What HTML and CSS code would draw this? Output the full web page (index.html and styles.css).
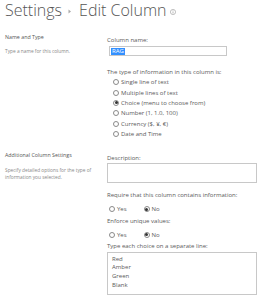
FILE: index.html
```html
<!DOCTYPE html>
<html lang="en">
<head>
    <meta charset="UTF-8">
    <title>Settings - Edit Column</title>
    <link rel="stylesheet" href="styles.css">
</head>
<body>
    <h1 class="page-title">
        <span>Settings</span>
        <svg class="crumb-sep" width="4" height="5" viewBox="0 0 4 5"><path d="M0.5 0.5 L3 2.5 L0.5 4.5 Z" fill="#aaa"/></svg>
        <span>Edit Column</span>
        <svg class="info-icon" width="6" height="6" viewBox="0 0 12 12"><circle cx="6" cy="6" r="5.2" fill="none" stroke="#999" stroke-width="1.2"/><rect x="5.3" y="5" width="1.4" height="4" fill="#999"/><rect x="5.3" y="2.8" width="1.4" height="1.4" fill="#999"/></svg>
    </h1>

    <div class="section section-first">
        <div class="section-info">
            <h2>Name and Type</h2>
            <p>Type a name for this column.</p>
        </div>
        <div class="section-body">
            <div class="field-label">Column name:</div>
            <div class="name-input"><span class="selected">RAG</span></div>

            <div class="field-label type-label">The type of information in this column is:</div>
            <div class="type-list">
                <div class="radio-row"><span class="radio"></span>Single line of text</div>
                <div class="radio-row"><span class="radio"></span>Multiple lines of text</div>
                <div class="radio-row"><span class="radio checked"></span>Choice (menu to choose from)</div>
                <div class="radio-row"><span class="radio"></span>Number (1, 1.0, 100)</div>
                <div class="radio-row"><span class="radio"></span>Currency ($, ¥, €)</div>
                <div class="radio-row"><span class="radio"></span>Date and Time</div>
            </div>
        </div>
    </div>

    <div class="section section-second">
        <div class="section-info">
            <h2>Additional Column Settings</h2>
            <p>Specify detailed options for the type of information you selected.</p>
        </div>
        <div class="section-body">
            <div class="field-label">Description:</div>
            <div class="text-box description-box"></div>

            <div class="field-label require-label">Require that this column contains information:</div>
            <div class="yes-no first-yes-no">
                <span class="radio"></span><span class="opt">Yes</span>
                <span class="radio checked"></span><span class="opt">No</span>
            </div>

            <div class="field-label enforce-label">Enforce unique values:</div>
            <div class="yes-no">
                <span class="radio"></span><span class="opt">Yes</span>
                <span class="radio checked"></span><span class="opt">No</span>
            </div>

            <div class="field-label choices-label">Type each choice on a separate line:</div>
            <div class="text-box choices-box">
                <div>Red</div>
                <div>Amber</div>
                <div>Green</div>
                <div>Blank</div>
            </div>
        </div>
    </div>
</body>
</html>
```
FILE: styles.css
```css
* {
    margin: 0;
    padding: 0;
    box-sizing: border-box;
}

body {
    font-family: 'Open Sans', 'Liberation Sans', sans-serif;
    background: #fff;
    color: #555;
    padding: 0 5px;
}

.page-title {
    display: flex;
    align-items: center;
    font-size: 16px;
    font-weight: 300;
    line-height: 20px;
    color: #555;
}

.crumb-sep {
    margin: 2px 7px 0 6px;
}

.info-icon {
    margin: 3px 0 0 4px;
}

.section {
    display: grid;
    grid-template-columns: 102px 1fr;
}

.section-first {
    margin-top: 13px;
}

.section-second {
    margin-top: 12px;
}

.section-info h2 {
    font-size: 5.3px;
    font-weight: 400;
    line-height: 8px;
    color: #555;
}

.section-info p {
    font-size: 4.8px;
    line-height: 6.6px;
    color: #888;
    margin-top: 7px;
    padding-right: 6px;
}

.section-second .section-info p {
    margin-top: 8px;
}

.section-body {
    padding-top: 2.5px;
    font-size: 6px;
    color: #5a5a5a;
}

.field-label {
    line-height: 8px;
}

.name-input {
    margin: 2.5px 0 0 2px;
    width: 118px;
    height: 10px;
    border: 1px solid #c8c8c8;
    padding: 1px 0 0 1px;
    line-height: 7px;
}

.selected {
    background: #3390ff;
    color: #fff;
    padding: 0 1px;
    display: inline-block;
}

.type-label {
    margin-top: 11.5px;
}

.type-list {
    margin-top: 1.5px;
    padding-left: 6px;
}

.radio-row {
    display: flex;
    align-items: center;
    height: 10.4px;
}

.radio {
    width: 6px;
    height: 6px;
    border: 1px solid #8a8a8a;
    border-radius: 50%;
    margin-right: 2px;
    display: flex;
    align-items: center;
    justify-content: center;
    flex-shrink: 0;
}

.radio.checked::after {
    content: '';
    width: 3px;
    height: 3px;
    border-radius: 50%;
    background: #333;
}

.text-box {
    border: 1px solid #c8c8c8;
    width: 150px;
}

.description-box {
    margin-top: 1.5px;
    height: 20px;
}

.require-label {
    margin-top: 8px;
}

.yes-no {
    display: flex;
    align-items: center;
    height: 10px;
    margin-top: 5px;
    padding-left: 2px;
}

.yes-no .opt {
    margin-right: 17px;
}

.enforce-label,
.choices-label {
    margin-top: 2.3px;
}

.choices-box {
    margin-top: 2.2px;
    height: 43px;
    padding: 1.7px 0 0 4px;
    line-height: 8.6px;
}
```
